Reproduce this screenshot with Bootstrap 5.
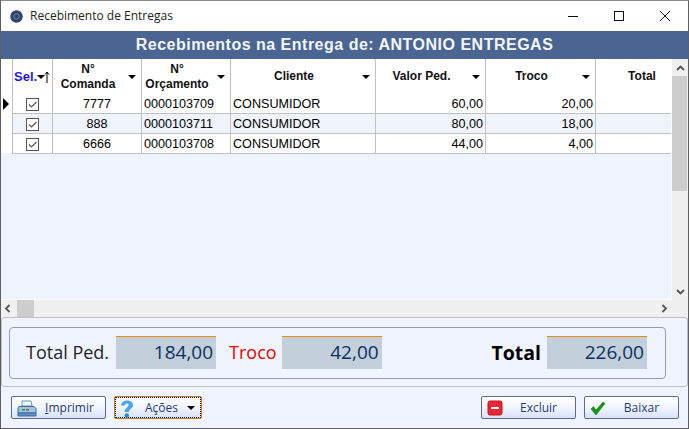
<!DOCTYPE html>
<html lang="pt">
<head>
<meta charset="utf-8">
<title>Recebimento de Entregas</title>
<link href="https://cdn.jsdelivr.net/npm/bootstrap@5.3.0/dist/css/bootstrap.min.css" rel="stylesheet">
<style>
html,body{height:100%;margin:0;overflow:hidden}
body{background:#f0f4ff;font-family:"Liberation Sans",Arial,sans-serif}
.win{width:689px;height:429px;border:1px solid #5f5f5f;border-top-color:#8a8a8a;background:#f0f4ff;overflow:hidden}
.tbar{height:30px;background:#fff;padding-left:9px;font-size:12px;color:#222;font-family:"Open Sans","Noto Sans",sans-serif}
.tbar .ttl{margin-left:7px}
.wbtn{width:46px;height:30px}
.band{height:28px;background:#4a6591;color:#f4f6fb;font-size:16px;font-weight:700;letter-spacing:.5px;line-height:28px;text-align:center}
.gridwrap{height:241px}
.gridmain{width:671px;min-width:0}
.gridarea{height:241px;overflow:hidden;background:#eff3fe;border-right:1px solid #fff;border-bottom:1px solid #fff;align-items:flex-start}
.ind{width:11px;height:94px;flex:none;background:#fff;position:relative}
.ind svg{position:absolute;left:2px;top:39px}
.tgrid{border-collapse:collapse;table-layout:fixed;width:659px;font-size:12.6px;color:#000;flex:none}
.tgrid th{height:35px;background:#fff;border:solid #c0c0c0;border-width:0 1px 0 1px;font-size:12px;font-weight:700;text-align:center;padding:0 18px 0 0;line-height:15px;position:relative;color:#111;vertical-align:middle;white-space:nowrap}
.tgrid td{height:20px;padding:1px 2px 0;border:1px solid #c0c0c0;line-height:18px;white-space:nowrap;background:#fff}
.tgrid tr:nth-child(2) td{background:#eef3fc}
.tgrid tr:first-child td{border-top:0;height:19px}
.numc{text-align:right}
.ctrc{text-align:center}
.tgrid th.selh{color:#1a1ae6;text-align:left;padding:0 0 0 1px;font-size:13px}
.tgrid th.toth{padding:0 0 0 17px}
.caret{position:absolute;top:16px;right:5px;width:0;height:0;border-left:4px solid transparent;border-right:4px solid transparent;border-top:4px solid #000}
.cbx{display:block;margin:auto}
.vbar{width:16px;flex:none;background:#f0f0f0}
.vbar .aw{height:17px}
.vthumb{height:115px;background:#cdcdcd;margin-right:1px}
.hbar{height:17px;background:#f0f0f0;padding:0 3px}
.hthumb{width:17px;height:17px;background:#cdcdcd;margin-left:6px}
.sumpanel{height:70px;border:1px solid #c0c0c0;border-radius:3px;padding:9px 21px 7px 7px}
.grp{height:52px;border:1px solid #8f9db5;border-radius:4px;padding:8px 18px 9px 16px}
.lbl{font-size:18px;font-family:"Open Sans","Noto Sans",sans-serif;line-height:33px}
.lbl-red{color:#f00000}
.lbl-strong{font-weight:700;font-size:19.5px;color:#000}
.val{width:100px;height:33px;background:#c3cfdb;border-top:1px solid #f08c00;color:#0a3163;font-size:19px;line-height:31px;text-align:right;padding-right:3px;font-family:"Open Sans","Noto Sans",sans-serif}
.foot{padding:9px 9px 0 10px}
.wbt{height:23px;padding:0;border:1px solid #5c6b8a;border-radius:2px;background:linear-gradient(#fff,#f2f5ff 50%,#d8e1fb);color:#1f3b73;font-size:12px;font-family:"Open Sans","Noto Sans",sans-serif;display:flex;align-items:center;position:relative}
.wbt .ic{position:absolute;left:5px;top:3px}
.b1{width:95px;justify-content:center;padding-left:22px}
.b2{width:88px;border-color:#c77a1b;outline:1px dotted #111;outline-offset:-2px;padding-left:30px}
.b3{width:95px;justify-content:center;padding-left:20px}
.gap-x{gap:8px}
</style>
</head>
<body>
<div class="win d-flex flex-column">
  <div class="tbar d-flex align-items-center">
    <svg width="13" height="13" viewBox="0 0 13 13"><circle cx="6.5" cy="6.5" r="6.200" fill="#2d4468"/><circle cx="6.500" cy="6.500" r="2.800" fill="none" stroke="#6f86a8"/></svg>
    <span class="ttl">Recebimento de Entregas</span>
    <div class="ms-auto d-flex">
      <div class="wbtn d-flex align-items-center justify-content-center"><svg width="12" height="12"><path d="M1 6.5h10" stroke="#111"/></svg></div>
      <div class="wbtn d-flex align-items-center justify-content-center"><svg width="12" height="12"><rect x="1.5" y="1.5" width="9" height="9" fill="none" stroke="#111"/></svg></div>
      <div class="wbtn d-flex align-items-center justify-content-center"><svg width="12" height="12"><path d="M1 1l10 10M11 1L1 11" stroke="#111"/></svg></div>
    </div>
  </div>
  <div class="band">Recebimentos na Entrega de: ANTONIO ENTREGAS</div>
  <div class="gridwrap d-flex">
    <div class="gridmain d-flex flex-column">
      <div class="gridarea d-flex">
        <div class="ind"><svg width="6" height="12"><path d="M0 0l6 6-6 6z" fill="#000"/></svg></div>
        <table class="tgrid">
          <colgroup><col style="width:40px"><col style="width:89px"><col style="width:89px"><col style="width:145px"><col style="width:110px"><col style="width:110px"><col style="width:76px"></colgroup>
          <thead>
            <tr>
              <th class="selh">Sel.<span class="caret" style="right:7px"></span><svg class="position-absolute" style="top:12px;right:2px" width="6" height="12"><path d="M3 12V1M1 3.5L3 1l2 2.5" stroke="#000" fill="none"/></svg></th>
              <th>N°<br>Comanda<span class="caret"></span></th>
              <th>N°<br>Orçamento<span class="caret"></span></th>
              <th>Cliente<span class="caret"></span></th>
              <th>Valor Ped.<span class="caret"></span></th>
              <th>Troco<span class="caret"></span></th>
              <th class="toth">Total</th>
            </tr>
          </thead>
          <tbody>
            <tr><td class="ctrc"><svg class="cbx" width="13" height="13"><rect x=".5" y=".5" width="12" height="12" fill="#fff" stroke="#555"/><path d="M3 6.5l2.500 2.500 5-5" stroke="#555" stroke-width="1.200" fill="none"/></svg></td><td class="ctrc">7777</td><td>0000103709</td><td>CONSUMIDOR</td><td class="numc">60,00</td><td class="numc">20,00</td><td></td></tr>
            <tr><td class="ctrc"><svg class="cbx" width="13" height="13"><rect x=".5" y=".5" width="12" height="12" fill="#fff" stroke="#555"/><path d="M3 6.5l2.500 2.500 5-5" stroke="#555" stroke-width="1.200" fill="none"/></svg></td><td class="ctrc">888</td><td>0000103711</td><td>CONSUMIDOR</td><td class="numc">80,00</td><td class="numc">18,00</td><td></td></tr>
            <tr><td class="ctrc"><svg class="cbx" width="13" height="13"><rect x=".5" y=".5" width="12" height="12" fill="#fff" stroke="#555"/><path d="M3 6.5l2.500 2.500 5-5" stroke="#555" stroke-width="1.200" fill="none"/></svg></td><td class="ctrc">6666</td><td>0000103708</td><td>CONSUMIDOR</td><td class="numc">44,00</td><td class="numc">4,00</td><td></td></tr>
          </tbody>
        </table>
      </div>
    </div>
    <div class="vbar d-flex flex-column">
      <div class="aw d-flex align-items-center justify-content-center"><svg width="9" height="6"><path d="M1 5l3.500-3.500L8 5" stroke="#555" stroke-width="1.800" fill="none"/></svg></div>
      <div class="vthumb"></div>
      <div class="aw d-flex align-items-center justify-content-center mt-auto"><svg width="9" height="6"><path d="M1 1l3.500 3.500L8 1" stroke="#555" stroke-width="1.800" fill="none"/></svg></div>
    </div>
  </div>
  <div class="hbar d-flex align-items-center">
    <svg width="7" height="9"><path d="M5.500 1L2 4.500 5.500 8" stroke="#555" stroke-width="1.800" fill="none"/></svg>
    <div class="hthumb"></div>
    <svg class="ms-auto" style="margin-right:17px" width="7" height="9"><path d="M1.500 1L5 4.500 1.500 8" stroke="#555" stroke-width="1.800" fill="none"/></svg>
  </div>
  <div class="sumpanel">
    <div class="grp d-flex align-items-start">
      <span class="lbl">Total Ped.</span>
      <div class="val" style="margin-left:7px">184,00</div>
      <span class="lbl lbl-red" style="margin-left:13px">Troco</span>
      <div class="val" style="margin-left:5px">42,00</div>
      <span class="lbl lbl-strong ms-auto">Total</span>
      <div class="val" style="margin-left:6px">226,00</div>
    </div>
  </div>
  <div class="foot d-flex gap-x">
    <button class="wbt b1" type="button"><svg class="ic" width="20" height="17" viewBox="0 0 20 17"><path d="M5 1h9l1 5H5z" fill="#f2f7fc" stroke="#6f93b5"/><path d="M2 6.500h15l2 2V13H1V8z" fill="#9cc4e4" stroke="#3f6c99"/><path d="M1 13h18v3H1z" fill="#5f93c4" stroke="#3f6c99"/><rect x="5" y="9" width="3" height="1.500" fill="#2f9a3a"/><rect x="9" y="9" width="3" height="1.500" fill="#d8323a"/></svg><span><u>I</u>mprimir</span></button>
    <button class="wbt b2" type="button"><svg class="ic" width="14" height="18" viewBox="0 0 14 18"><path d="M1 5.500C1 -1 13 -1 13 5c0 3.500-4 3.500-4 7H4.500c0-4 4-4.500 4-7C8.500 3 5.500 3 5 5.500z" fill="#4aa6e8"/><circle cx="6.800" cy="15.500" r="2.200" fill="#2b86cc"/></svg><span>Ações</span><span class="caret" style="top:9px;right:6px"></span></button>
    <button class="wbt b3 ms-auto" type="button"><svg class="ic" width="16" height="16" viewBox="0 0 16 16"><rect x="1" y="1" width="14" height="14" rx="2" fill="#ee2430" stroke="#c41420"/><rect x="4" y="7" width="8" height="2" fill="#fff"/></svg><span>Excluir</span></button>
    <button class="wbt b3" type="button"><svg class="ic" width="16" height="16" viewBox="0 0 16 16"><path d="M1 9l2.500-2.500L6 10l7-8 2 1.500L6 15z" fill="#119a11" stroke="#0a6e0a" stroke-width=".5"/></svg><span>Baixar</span></button>
  </div>
</div>
</body>
</html>
